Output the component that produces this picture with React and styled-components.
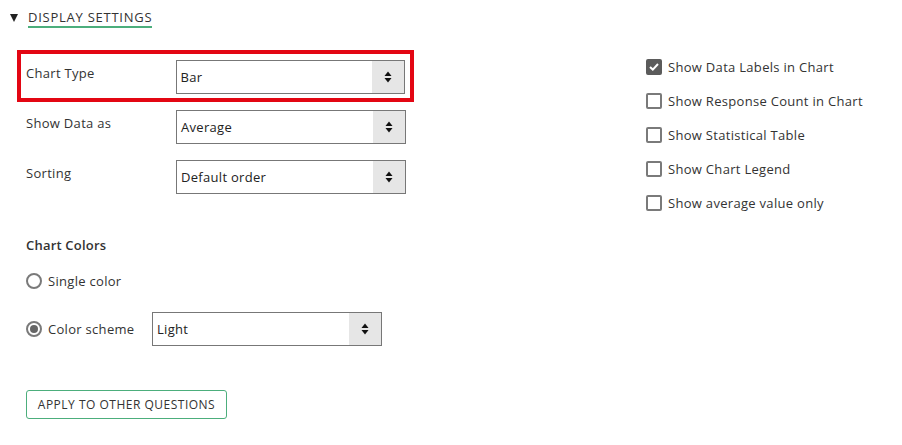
import React from "react";
import styled, { createGlobalStyle } from "styled-components";

const GlobalStyle = createGlobalStyle`
  body {
    margin: 0;
    background: #fff;
    font-family: "Open Sans", "Liberation Sans", sans-serif;
    color: #333;
  }
`;

const Page = styled.div`
  width: 902px;
  height: 445px;
  padding: 10px 0 0 10px;
  box-sizing: border-box;
`;

const Header = styled.div`
  display: flex;
  align-items: center;
  height: 16px;
`;

const Caret = styled.span`
  width: 0;
  height: 0;
  border-left: 4px solid transparent;
  border-right: 4px solid transparent;
  border-top: 8px solid #222;
  margin-right: 10px;
`;

const HeaderTitle = styled.span`
  font-size: 13px;
  letter-spacing: 0.75px;
  color: #333;
  text-transform: uppercase;
  line-height: 16px;
  padding-bottom: 1px;
  border-bottom: 2px solid #4cae7c;
`;

const Body = styled.div`
  display: flex;
  margin-top: 24px;
`;

const LeftColumn = styled.div`
  display: flex;
  flex-direction: column;
  width: 397px;
  margin-left: 7px;
`;

const RightColumn = styled.div`
  display: flex;
  flex-direction: column;
  gap: 18px;
  margin-left: 232px;
  margin-top: 9px;
`;

const Row = styled.div`
  display: flex;
  align-items: flex-start;
  margin-top: ${(p) => p.$top || 0}px;
  padding: ${(p) => (p.$highlight ? "6px 5px 4px 5px" : "0 0 0 9px")};
  border: ${(p) => (p.$highlight ? "4px solid #e30613" : "none")};
`;

const Label = styled.div`
  width: 150px;
  font-size: 13px;
  line-height: 16px;
  padding-top: 5px;
  letter-spacing: 0.3px;
  color: #333;
`;

const SelectBox = styled.div`
  display: flex;
  align-items: stretch;
  width: 230px;
  height: 34px;
  box-sizing: border-box;
  border: 1px solid #777;
  background: #fff;
`;

const SelectValue = styled.div`
  flex: 1;
  display: flex;
  align-items: center;
  padding-left: 4px;
  font-size: 13px;
  letter-spacing: 0.3px;
  color: #222;
`;

const SelectArrow = styled.div`
  width: 32px;
  background: #e6e6e6;
  display: flex;
  align-items: center;
  justify-content: center;
`;

const SectionTitle = styled.div`
  font-size: 13px;
  font-weight: 600;
  letter-spacing: 0.2px;
  color: #333;
  margin: 43px 0 0 9px;
  line-height: 16px;
`;

const RadioRow = styled.label`
  display: flex;
  align-items: center;
  margin: ${(p) => p.$top}px 0 0 9px;
  font-size: 13px;
  letter-spacing: 0.3px;
  color: #333;
`;

const Radio = styled.span`
  width: 16px;
  height: 16px;
  box-sizing: border-box;
  border-radius: 50%;
  border: 2px solid #7a7a7a;
  display: flex;
  align-items: center;
  justify-content: center;
  margin-right: 6px;
  flex-shrink: 0;

  &::after {
    content: "";
    width: 8px;
    height: 8px;
    border-radius: 50%;
    background: ${(p) => (p.$checked ? "#666" : "transparent")};
  }
`;

const RadioText = styled.span`
  width: 104px;
`;

const ApplyButton = styled.button`
  align-self: flex-start;
  margin: 44px 0 0 9px;
  width: 201px;
  height: 29px;
  background: #fff;
  border: 1px solid #4cae7c;
  border-radius: 3px;
  font-family: inherit;
  font-size: 12px;
  color: #333;
  text-transform: uppercase;
  letter-spacing: 0.5px;
  cursor: pointer;
  padding: 0;
`;

const CheckRow = styled.label`
  display: flex;
  align-items: center;
  font-size: 13px;
  letter-spacing: 0.3px;
  color: #333;
  line-height: 16px;
`;

const CheckBox = styled.span`
  width: 16px;
  height: 16px;
  box-sizing: border-box;
  border-radius: 2px;
  border: 2px solid ${(p) => (p.$checked ? "#5b5b5b" : "#7a7a7a")};
  background: ${(p) => (p.$checked ? "#5b5b5b" : "#fff")};
  display: flex;
  align-items: center;
  justify-content: center;
  margin-right: 6px;
`;

const Arrows = () => (
  <svg width="8" height="12" viewBox="0 0 8 12">
    <path d="M4 0.5 L7.5 5 L0.5 5 Z" fill="#111" />
    <path d="M0.5 7 L7.5 7 L4 11.5 Z" fill="#111" />
  </svg>
);

const Select = ({ value }) => (
  <SelectBox>
    <SelectValue>{value}</SelectValue>
    <SelectArrow>
      <Arrows />
    </SelectArrow>
  </SelectBox>
);

const checks = [
  { label: "Show Data Labels in Chart", checked: true },
  { label: "Show Response Count in Chart" },
  { label: "Show Statistical Table" },
  { label: "Show Chart Legend" },
  { label: "Show average value only" },
];

export default function App() {
  return (
    <Page>
      <GlobalStyle />
      <Header>
        <Caret />
        <HeaderTitle>Display Settings</HeaderTitle>
      </Header>
      <Body>
        <LeftColumn>
          <Row $highlight>
            <Label>Chart Type</Label>
            <Select value="Bar" />
          </Row>
          <Row $top={8}>
            <Label>Show Data as</Label>
            <Select value="Average" />
          </Row>
          <Row $top={16}>
            <Label>Sorting</Label>
            <Select value="Default order" />
          </Row>
          <SectionTitle>Chart Colors</SectionTitle>
          <RadioRow $top={19}>
            <Radio />
            <RadioText>Single color</RadioText>
          </RadioRow>
          <RadioRow $top={22}>
            <Radio $checked />
            <RadioText>Color scheme</RadioText>
            <Select value="Light" />
          </RadioRow>
          <ApplyButton>Apply to other questions</ApplyButton>
        </LeftColumn>
        <RightColumn>
          {checks.map((c) => (
            <CheckRow key={c.label}>
              <CheckBox $checked={c.checked}>
                {c.checked && (
                  <svg width="10" height="8" viewBox="0 0 10 8">
                    <path
                      d="M1 4 L3.8 6.6 L9 1"
                      fill="none"
                      stroke="#fff"
                      strokeWidth="2"
                    />
                  </svg>
                )}
              </CheckBox>
              {c.label}
            </CheckRow>
          ))}
        </RightColumn>
      </Body>
    </Page>
  );
}
